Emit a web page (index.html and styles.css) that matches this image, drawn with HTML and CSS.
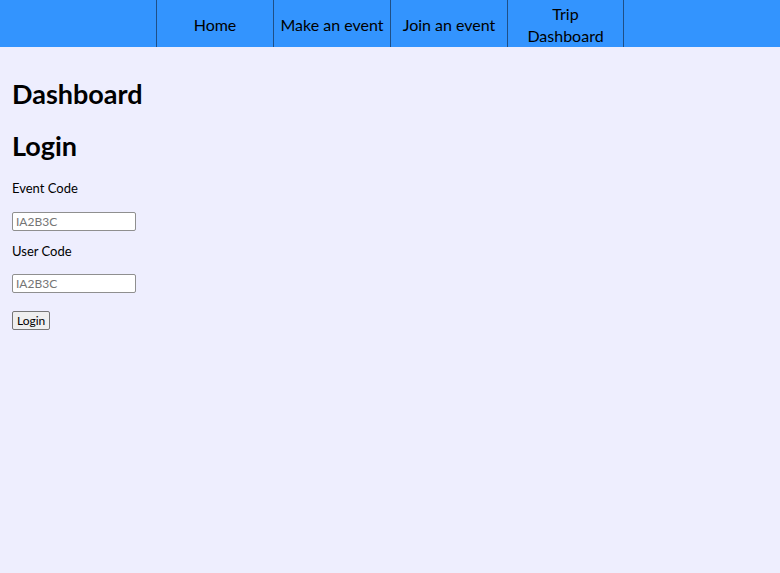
FILE: index.html
```html
<!DOCTYPE html>
<html>
<head>
<meta charset="utf-8">
<link rel="stylesheet" href="styles.css">
</head>
<body>
<nav class="topnav">
  <a class="nav-item" href="#">Home</a>
  <a class="nav-item" href="#">Make an event</a>
  <a class="nav-item" href="#">Join an event</a>
  <a class="nav-item" href="#">Trip Dashboard</a>
</nav>
<main class="content">
  <h1 class="page-title">Dashboard</h1>
  <h2 class="section-title">Login</h2>
  <form class="login-form">
    <label class="field-label first" for="ev">Event Code</label>
    <input class="field-input" id="ev" type="text" placeholder="IA2B3C">
    <label class="field-label second" for="us">User Code</label>
    <input class="field-input last" id="us" type="text" placeholder="IA2B3C">
    <button class="login-btn" type="button">Login</button>
  </form>
</main>
</body>
</html>
```
FILE: styles.css
```css
html, body {
  margin: 0;
  padding: 0;
  background: #eeeefe;
  height: 100%;
}
body {
  font-family: "Lato", "Open Sans", sans-serif;
  color: #000;
}
.topnav {
  display: flex;
  justify-content: center;
  height: 47px;
  background: #3394fe;
}
.nav-item {
  width: 117px;
  box-sizing: border-box;
  border-left: 1px solid #1f4f86;
  display: flex;
  align-items: center;
  justify-content: center;
  text-align: center;
  color: #000;
  text-decoration: none;
  font-size: 16px;
  line-height: 22px;
  padding: 3px 6px 0;
}
.nav-item:last-child {
  border-right: 1px solid #1f4f86;
}
.content {
  padding: 0 12px;
}
.page-title {
  font-size: 27px;
  line-height: 34px;
  margin: 30px 0 0;
  font-weight: 700;
}
.section-title {
  font-size: 27px;
  line-height: 34px;
  margin: 18px 0 0;
  font-weight: 700;
}
.login-form {
  display: flex;
  flex-direction: column;
  align-items: flex-start;
}
.field-label {
  font-size: 13px;
  line-height: 16px;
}
.field-label.first {
  margin-top: 17px;
}
.field-label.second {
  margin-top: 12px;
}
.field-input {
  margin-top: 16px;
  width: 124px;
  height: 19px;
  box-sizing: border-box;
  font-family: "Lato", sans-serif;
  font-size: 12px;
  padding: 0 3px;
  border: 1px solid #8f8f8f;
  border-radius: 2px;
  background: #fff;
}
.field-input.last {
  margin-top: 15px;
}
.field-input::placeholder {
  color: #757575;
}
.login-btn {
  margin-top: 18px;
  font-family: "Lato", sans-serif;
  font-size: 12px;
  height: 19px;
  padding: 0 4px;
  border: 1px solid #767676;
  border-radius: 2px;
  background: #efefef;
  color: #000;
}
```
